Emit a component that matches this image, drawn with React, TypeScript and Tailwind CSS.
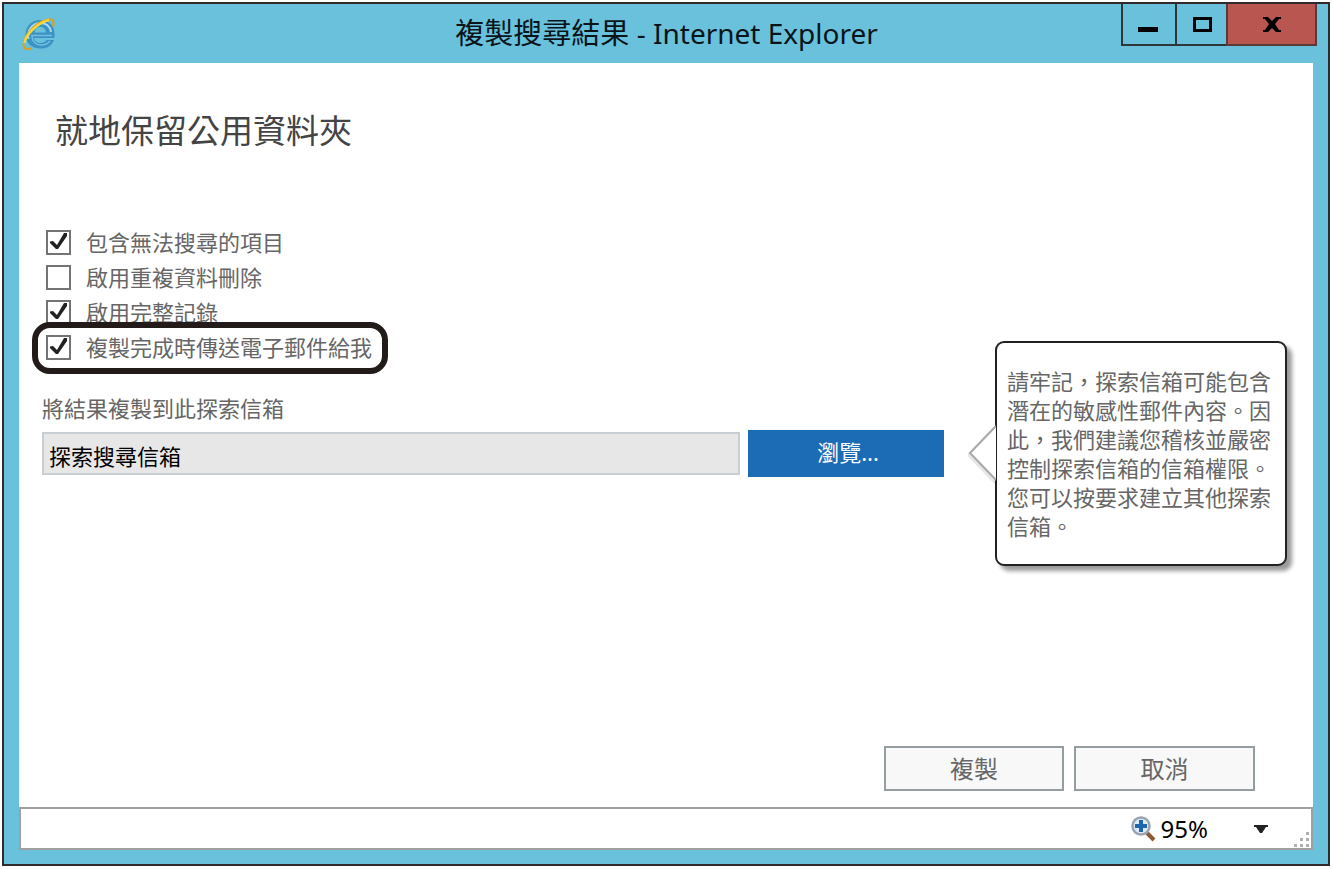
import { useState } from 'react'

const font = "font-['Noto_Sans','Noto_Sans_CJK_TC',sans-serif]"

const initialOptions = [
  { id: 'unsearchable', label: '包含無法搜尋的項目', checked: true, highlighted: false },
  { id: 'dedupe', label: '啟用重複資料刪除', checked: false, highlighted: false },
  { id: 'logging', label: '啟用完整記錄', checked: true, highlighted: false },
  { id: 'notify', label: '複製完成時傳送電子郵件給我', checked: true, highlighted: true },
]

function BrowserLogo() {
  return (
    <svg className="size-9" viewBox="0 0 36 36" fill="none" aria-hidden="true">
      <path
        fillRule="evenodd"
        d="M20 4C28 4 34.500 9 34.500 18v4H14c.500 3.500 3 5 6.500 5 3 0 4.500-1 6-3h7.500c-2 6-7 8.500-13.500 8.500C11.500 32.500 5.500 27 5.500 18.500S12 4 20 4zM14.500 16.500h11.500c-.500-4-2.500-5.500-5.500-5.500s-5.500 1.500-6 5.500z"
        fill="#3b93c4"
      />
      <path d="M32 19.500H12c0 6 3.500 9.500 9 9.500 4 0 7-1.500 9-4" stroke="#75bde0" strokeWidth="1.500" />
      <path d="M8.500 23C6.500 15 12 7.500 20 7c6 0 10 3 11 9" stroke="#a6daf0" strokeWidth="2" />
      <path d="M12 32C7 34 3.500 33 3.500 29C3.500 20 15 6 28 3.500C33 2.500 34.500 5 33 11" stroke="#dc9f22" strokeWidth="2" />
      <path d="M4.500 27C5.500 19 17 7 29 4" stroke="#f8d63c" strokeWidth="2.500" />
    </svg>
  )
}

function TitleBar() {
  return (
    <header className="flex h-[59px] shrink-0 items-center">
      <div className="flex-1 pl-4">
        <BrowserLogo />
      </div>
      <h1 className="pr-1 pb-[2px] text-[29px] leading-9 text-[#0b1519]">
        複製搜尋結果 <span className="text-[28px]">- Internet Explorer</span>
      </h1>
      <div className="flex flex-1 justify-end self-start pr-[11px]">
        <div className="flex h-[42px]">
          <button type="button" aria-label="最小化" className="grid w-[54px] place-items-center border-b-2 border-l-2 border-[#2f3638]">
            <svg className="h-6 w-6" viewBox="0 0 24 24" aria-hidden="true">
              <path d="M1 15h20v5H1z" />
            </svg>
          </button>
          <button type="button" aria-label="最大化" className="grid w-[51px] place-items-center border-b-2 border-l-2 border-[#2f3638]">
            <svg className="h-6 w-6" viewBox="0 0 24 24" fill="none" stroke="#000" strokeWidth="3" aria-hidden="true">
              <path d="M4.500 6.500h16v12h-16z" />
            </svg>
          </button>
          <button type="button" aria-label="關閉" className="grid w-[91px] place-items-center border-x-2 border-b-2 border-[#5b3a3a] bg-[#b9564f]">
            <svg className="h-6 w-6" viewBox="0 0 24 24" aria-hidden="true">
              <path d="M3 5h5l4 4 4-4h5v2h-2l-4 5 4 6h2v2h-5l-4-4-4 4H3v-2h2l4-6-4-5H3z" />
            </svg>
          </button>
        </div>
      </div>
    </header>
  )
}

function CopyOptions() {
  const [options, setOptions] = useState(initialOptions)

  const toggle = (id: string) => {
    setOptions((current) => current.map((item) => (item.id === id ? { ...item, checked: !item.checked } : item)))
  }

  return (
    <ul className="pl-1">
      {options.map((option) => (
        <li key={option.id} className="relative flex h-[35px] w-fit items-center">
          {option.highlighted && (
            <span className="absolute -top-2 -right-4 -left-[14px] h-[52px] rounded-[18px] border-[6px] border-[#231a1a] bg-white" />
          )}
          <label htmlFor={option.id} className="relative flex items-center gap-[15px]">
            <span className="grid size-[25px]">
              <input
                id={option.id}
                type="checkbox"
                checked={option.checked}
                onChange={() => toggle(option.id)}
                className="peer col-start-1 row-start-1 appearance-none border-2 border-[#747474] bg-white"
              />
              <svg className="pointer-events-none invisible col-start-1 row-start-1 peer-checked:visible" viewBox="0 0 25 25" aria-hidden="true">
                <path d="M4 11.500l3-.500 4 4L18 3h3v3l-9 13h-2L4 13z" fill="#222" />
              </svg>
            </span>
            <span>{option.label}</span>
          </label>
        </li>
      ))}
    </ul>
  )
}

function MailboxNote() {
  return (
    <aside className="relative mt-[116px] h-fit w-[292px] shrink-0 rounded-[9px] border-2 border-[#1f2122] bg-white px-[10px] pt-6 pb-[23px] leading-[29px] shadow-[5px_5px_4px_#00000066]">
      <svg className="absolute top-[81px] -left-[29px] h-[60px] w-7" viewBox="0 0 28 60" fill="none" aria-hidden="true">
        <path d="M28 4L2 31l26 27" stroke="#00000018" strokeWidth="5" />
        <path d="M28 2L2 29l26 27" fill="#fff" stroke="#a8a8a8" strokeWidth="2" />
      </svg>
      <p>
        請牢記，探索信箱可能包含潛在的敏感性郵件內容。因此，我們建議您稽核並嚴密控制探索信箱的信箱權限。您可以按要求建立其他探索信箱。
      </p>
    </aside>
  )
}

function StatusBar() {
  return (
    <footer className="flex h-[43px] shrink-0 items-center justify-end border-2 border-[#a0a0a0] bg-white text-black">
      <button type="button" className="flex items-center gap-1">
        <svg className="size-[26px]" viewBox="0 0 26 26" fill="none" aria-hidden="true">
          <path d="M16 17l7 7" stroke="#8b5a35" strokeWidth="4" />
          <circle cx="10" cy="10" r="8.500" fill="#dcecf8" stroke="#9aa5b1" strokeWidth="2.500" />
          <path d="M10 4v12M4 10h12" stroke="#1f66ae" strokeWidth="4" />
        </svg>
        <span className="text-2xl">95%</span>
        <svg className="ml-[42px] h-2 w-[14px]" viewBox="0 0 14 8" aria-hidden="true">
          <path d="M0 0h14v2H12L8 8H6L2 2H0z" fill="#222" />
        </svg>
      </button>
      <svg className="ml-[25px] size-[18px] self-end" viewBox="0 0 18 18" fill="#b0b0b0" aria-hidden="true">
        <path d="M13 2h3v3h-3zM7 8h3v3H7zM13 8h3v3h-3zM1 14h3v3H1zM7 14h3v3H7zM13 14h3v3h-3z" />
      </svg>
    </footer>
  )
}

export default function App() {
  return (
    <div className={`flex min-h-screen bg-white pt-[2px] pr-[3px] pb-1 pl-[2px] ${font}`}>
      <div className="flex flex-1 flex-col border-2 border-[#302a2c] bg-[#6ac1dc]">
        <TitleBar />
        <div className="mr-[15px] mb-[14px] ml-[15px] flex flex-1 flex-col">
          <main className="flex flex-1 flex-col bg-white text-[22px] text-[#666]">
            <h2 className="pt-11 pl-9 text-[33px] leading-[48px] text-[#444]">就地保留公用資料夾</h2>
            <form className="flex flex-1 flex-col" onSubmit={(event) => event.preventDefault()}>
              <div className="flex gap-[51px] pt-[70px] pr-[26px] pl-[23px]">
                <div className="flex-1">
                  <CopyOptions />
                  <label htmlFor="mailbox" className="mt-[27px] block leading-8">
                    將結果複製到此探索信箱
                  </label>
                  <div className="mt-[6px] flex items-center gap-2">
                    <input
                      id="mailbox"
                      readOnly
                      value="探索搜尋信箱"
                      className="h-[43px] min-w-0 flex-1 border-2 border-[#c8ced1] bg-[#e8e7e7] px-[5px] pt-[2px] text-black"
                    />
                    <button type="button" className="h-[47px] w-[196px] bg-[#1c6bb5] pb-[2px] pl-1 text-[22px] text-white">
                      瀏覽...
                    </button>
                  </div>
                </div>
                <MailboxNote />
              </div>
              <div className="mt-auto flex justify-end gap-[10px] pr-[58px] pb-4 text-2xl">
                <button type="submit" className="h-[45px] w-[180px] border-2 border-[#949ea1] bg-[#f8f8f8]">
                  複製
                </button>
                <button type="button" className="h-[45px] w-[181px] border-2 border-[#949ea1] bg-[#f8f8f8]">
                  取消
                </button>
              </div>
            </form>
          </main>
          <StatusBar />
        </div>
      </div>
    </div>
  )
}
